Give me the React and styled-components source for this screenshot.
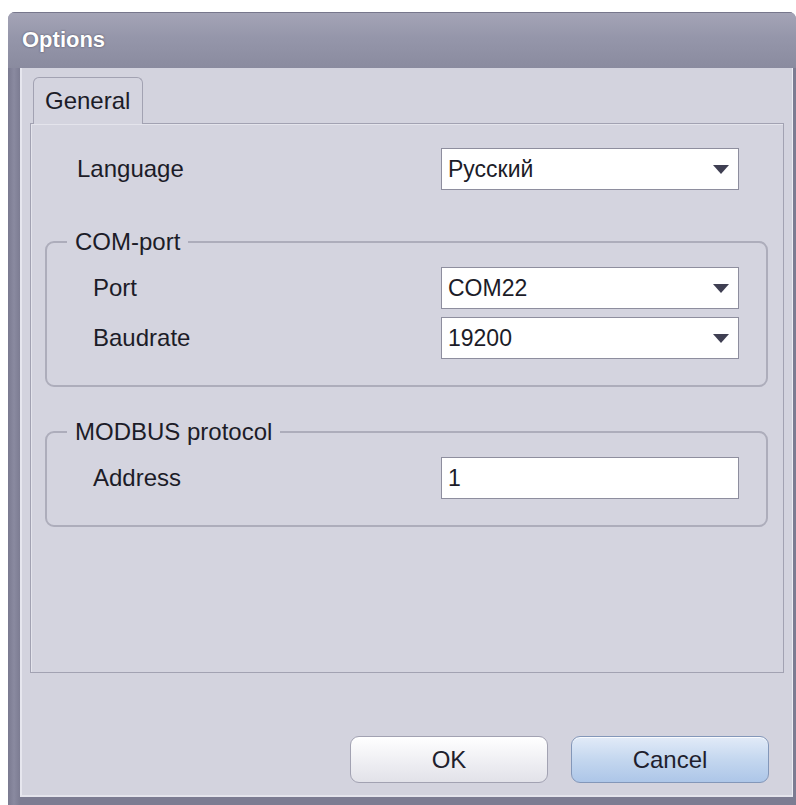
import React from 'react';
import styled, { createGlobalStyle } from 'styled-components';

const GlobalStyle = createGlobalStyle`
  html, body {
    margin: 0;
    padding: 0;
    background: #ffffff;
  }

  body {
    font-family: "Liberation Sans", Arial, sans-serif;
  }
`;

const Window = styled.div`
  display: flex;
  flex-direction: column;

  margin: 12px 0 0 8px;
  width: 788px;
  height: 793px;

  border-radius: 7px 7px 0 0;
  background: linear-gradient(to right, #7a7a90, #8a8aa0 6px, #7c7c92 12px);
  overflow: hidden;
`;

const TitleBar = styled.div`
  display: flex;
  align-items: center;

  height: 56px;
  padding: 0 0 2px 14px;
  box-sizing: border-box;

  border-top: 1px solid #77778c;
  background: linear-gradient(to bottom, #a4a4b6 0%, #9596aa 45%, #8a8b9f 100%);

  color: #ffffff;
  font-size: 22px;
  font-weight: bold;
  text-shadow: 0 0 2px rgba(40, 40, 60, 0.7);
`;

const Frame = styled.div`
  display: flex;
  flex: 1;

  padding: 0 3px 8px 12px;
`;

const Client = styled.div`
  display: flex;
  flex-direction: column;
  flex: 1;

  padding: 9px 8px 12px 8px;

  border-left: 2px solid #e6e6ee;
  border-right: 1px solid #ececf2;
  border-bottom: 2px solid #e4e4ec;
  background: #d3d3de;
`;

const TabBar = styled.div`
  display: flex;
  padding-left: 3px;
  position: relative;
  z-index: 1;
`;

const Tab = styled.div`
  width: 110px;
  height: 47px;
  margin-bottom: -1px;
  padding-left: 11px;
  box-sizing: border-box;

  display: flex;
  align-items: center;

  border: 1px solid #a2a2b2;
  border-bottom: none;
  border-radius: 6px 6px 0 0;
  background: #d4d4df;

  color: #1c1c28;
  font-size: 24px;
`;

const Pane = styled.div`
  height: 550px;
  box-sizing: border-box;

  padding: 24px 15px 0 14px;

  border: 1px solid #a2a2b2;
  box-shadow: inset 1px 1px 0 #e4e4ec;
  background: #d4d4df;
`;

const Row = styled.div`
  display: flex;
  align-items: center;
  justify-content: space-between;

  padding: ${p => p.$inset || '0 29px 0 32px'};

  & + & {
    margin-top: 8px;
  }
`;

const Label = styled.span`
  color: #1c1c28;
  font-size: 24px;
`;

const Field = styled.div`
  display: flex;
  align-items: center;
  justify-content: space-between;

  width: 298px;
  height: 42px;
  padding: 0 9px 0 6px;
  box-sizing: border-box;

  border: 1px solid #8e8e9e;
  background: #ffffff;

  color: #1c1c28;
  font-size: 23px;
`;

const Arrow = styled.span`
  width: 0;
  height: 0;

  border-left: 8px solid transparent;
  border-right: 8px solid transparent;
  border-top: 9px solid #3f3f52;
`;

const Group = styled.fieldset`
  margin: ${p => p.$top}px 0 0 0;
  padding: 11px 27px 26px 0;

  border: 2px solid #adadbb;
  border-radius: 9px;
  min-width: 0;
`;

const Legend = styled.legend`
  margin-left: 20px;
  padding: 0 8px;

  color: #1c1c28;
  font-size: 24px;
  line-height: 28px;
`;

const ButtonRow = styled.div`
  display: flex;
  justify-content: flex-end;
  gap: 23px;

  margin-top: auto;
  padding-right: 15px;
`;

const Button = styled.button`
  width: 198px;
  height: 47px;

  border: 1px solid ${p => (p.$focused ? '#8397b9' : '#a2a2b2')};
  border-radius: 9px;
  background: ${p =>
    p.$focused
      ? 'linear-gradient(to bottom, #e2ebf8 0%, #c4d7ef 50%, #adc6e8 100%)'
      : 'linear-gradient(to bottom, #ffffff 0%, #f0f0f4 50%, #e2e2e9 100%)'};
  box-shadow: inset 0 1px 0 rgba(255, 255, 255, 0.8);

  color: #1f1f2e;
  font-family: "Liberation Sans", Arial, sans-serif;
  font-size: 24px;
`;

function Combo({ value }) {
  return (
    <Field>
      <span>{value}</span>
      <Arrow />
    </Field>
  );
}

export default function App() {
  return (
    <>
      <GlobalStyle />
      <Window>
        <TitleBar>Options</TitleBar>
        <Frame>
          <Client>
            <TabBar>
              <Tab>General</Tab>
            </TabBar>
            <Pane>
              <Row>
                <Label>Language</Label>
                <Combo value="Русский" />
              </Row>

              <Group $top={38}>
                <Legend>COM-port</Legend>
                <Row $inset="0 0 0 46px">
                  <Label>Port</Label>
                  <Combo value="COM22" />
                </Row>
                <Row $inset="0 0 0 46px">
                  <Label>Baudrate</Label>
                  <Combo value="19200" />
                </Row>
              </Group>

              <Group $top={31}>
                <Legend>MODBUS protocol</Legend>
                <Row $inset="0 0 0 46px">
                  <Label>Address</Label>
                  <Field>1</Field>
                </Row>
              </Group>
            </Pane>
            <ButtonRow>
              <Button>OK</Button>
              <Button $focused>Cancel</Button>
            </ButtonRow>
          </Client>
        </Frame>
      </Window>
    </>
  );
}
